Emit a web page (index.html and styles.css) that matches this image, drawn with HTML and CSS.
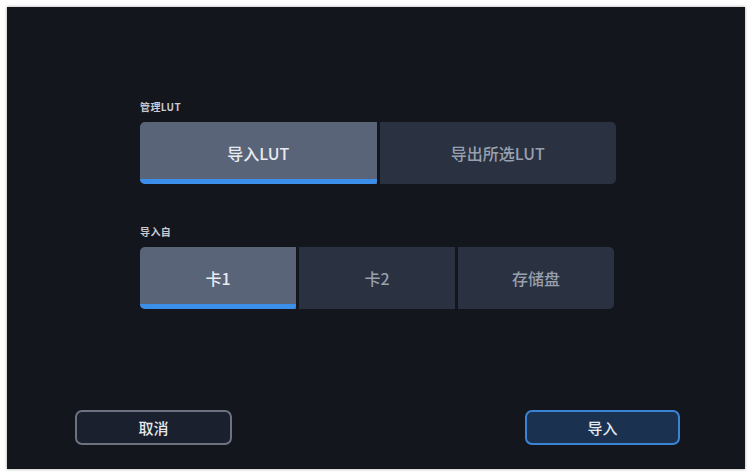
FILE: index.html
```html
<!DOCTYPE html>
<html lang="zh">
<head>
<meta charset="utf-8">
<link rel="stylesheet" href="styles.css">
</head>
<body>
<div class="panel">
  <div class="content">
    <div class="label">管理LUT</div>
    <div class="seg seg-two">
      <div class="opt active">导入LUT</div>
      <div class="opt">导出所选LUT</div>
    </div>
    <div class="label label-second">导入自</div>
    <div class="seg seg-three">
      <div class="opt active">卡1</div>
      <div class="opt">卡2</div>
      <div class="opt">存储盘</div>
    </div>
  </div>
  <div class="footer">
    <div class="btn btn-cancel">取消</div>
    <div class="btn btn-import">导入</div>
  </div>
</div>
</body>
</html>
```

FILE: styles.css
```css
html, body {
  margin: 0;
  padding: 0;
  background: #ffffff;
}
body {
  width: 754px;
  height: 476px;
  font-family: "Noto Sans CJK SC", "Noto Sans", sans-serif;
}
.panel {
  position: relative;
  margin: 7px 9px 7px 7px;
  width: 738px;
  height: 462px;
  background: #14161e;
  box-shadow: 0 0 3px rgba(0,0,0,0.35);
  display: flex;
  flex-direction: column;
  box-sizing: border-box;
  padding: 93px 65px 24px 68px;
}
.content {
  padding-left: 65px;
  display: flex;
  flex-direction: column;
}
.label {
  font-size: 10px;
  line-height: 13px;
  font-weight: 700;
  color: #c7cad1;
  margin-bottom: 9px;
  letter-spacing: 0.4px;
}
.label-second {
  margin-top: 41px;
}
.seg {
  display: flex;
  gap: 3px;
  height: 62px;
  border-radius: 5px;
  overflow: hidden;
}
.seg-two { width: 476px; }
.seg-three { width: 474px; }
.opt {
  flex: 1;
  display: flex;
  align-items: center;
  justify-content: center;
  background: #2a3141;
  color: #98a0ae;
  font-size: 16px;
  font-weight: 500;
  position: relative;
}
.opt.active {
  background: #5a6479;
  color: #e8ebf0;
}
.opt.active::after {
  content: "";
  position: absolute;
  left: 0;
  right: 0;
  bottom: 0;
  height: 5px;
  background: #3b8fea;
  border-radius: 0 0 3px 3px;
}
.footer {
  margin-top: auto;
  display: flex;
  justify-content: space-between;
}
.btn {
  box-sizing: border-box;
  height: 35px;
  border-radius: 7px;
  display: flex;
  align-items: center;
  justify-content: center;
  font-size: 15px;
  font-weight: 500;
  color: #e6e9ee;
}
.btn-cancel {
  width: 157px;
  border: 2px solid #6d7280;
  background: #1a202d;
}
.btn-import {
  width: 155px;
  border: 2px solid #3a84d6;
  background: #1b3150;
}
```
